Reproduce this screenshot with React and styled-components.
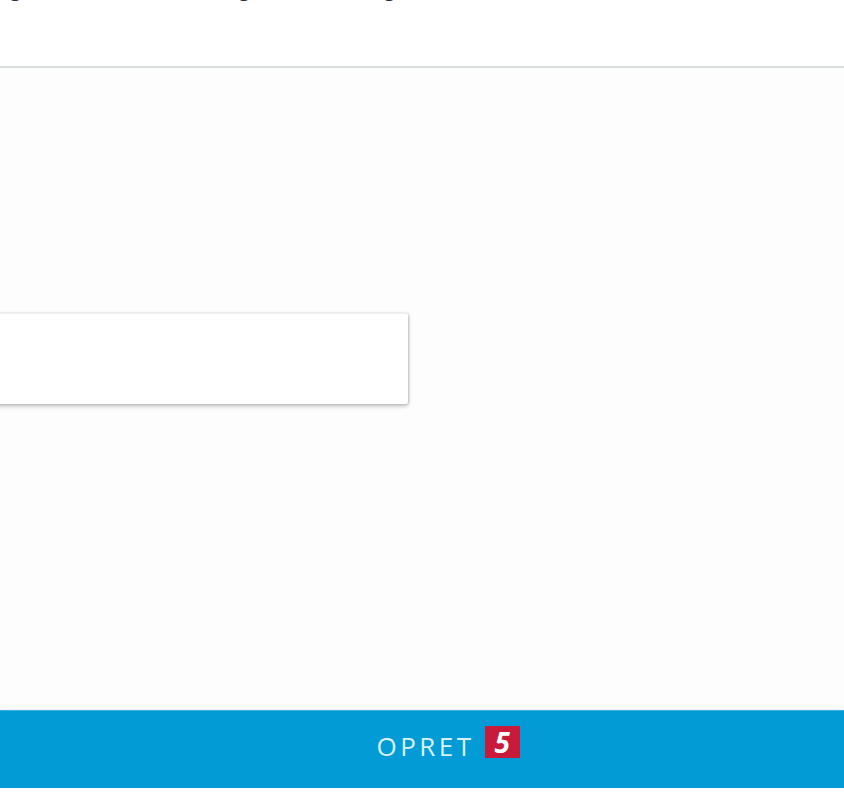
import styled, { createGlobalStyle } from 'styled-components';

const GlobalStyle = createGlobalStyle`
  html, body {
    margin: 0;
    padding: 0;
    background: #fefefe;
    font-family: 'Open Sans', 'Liberation Sans', sans-serif;
    overflow: hidden;
  }
`;

const App = () => {
  return (
    <>
      <GlobalStyle />
      <Page>
        <Header>
          <Intro>gentast den rette kode og skriv den ind igen.</Intro>
        </Header>
        <Body>
          <Field />
        </Body>
        <SubmitBar type="button">
          <span>OPRET</span>
          <Badge>5</Badge>
        </SubmitBar>
        <Footer />
      </Page>
    </>
  );
};

export default App;

const Page = styled.div`
  display: flex;
  flex-direction: column;
  width: 844px;
  height: 798px;
`;

const Header = styled.header`
  height: 66px;
  background: #ffffff;
  border-bottom: 2px solid #d9dddc;
  overflow: hidden;
`;

const Intro = styled.p`
  margin: -23px 0 0 10px;
  font-size: 20px;
  line-height: 24px;
  color: #2e2e2e;
  white-space: nowrap;
`;

const Body = styled.main`
  flex: 1;
  display: flex;
  flex-direction: column;
  align-items: flex-start;
  padding-top: 245px;
  background: #fdfdfd;
`;

const Field = styled.div`
  width: 420px;
  height: 90px;
  margin-left: -12px;
  background: #ffffff;
  border-top: 1px solid #f0f0f0;
  box-shadow: 0 2px 4px rgba(0, 0, 0, 0.28), 1px 0 2px rgba(0, 0, 0, 0.12);
  border-radius: 2px;
`;

const SubmitBar = styled.button`
  display: flex;
  align-items: center;
  justify-content: center;
  gap: 10px;
  height: 78px;
  width: 100%;
  border: 0;
  border-top: 1px solid #3aafdd;
  padding: 0 0 8px 52px;
  background: #039bd6;
  box-shadow: 0 2px 4px rgba(0, 0, 0, 0.35);
  color: #d8f2fb;
  font-family: 'Open Sans', 'Liberation Sans', sans-serif;
  font-size: 26px;
  letter-spacing: 3.5px;
  cursor: pointer;
`;

const Badge = styled.span`
  display: inline-flex;
  align-items: center;
  justify-content: center;
  width: 35px;
  height: 32px;
  margin-top: -8px;
  background: #c91a3a;
  color: #ffffff;
  font-size: 28px;
  font-weight: 700;
  font-style: italic;
  letter-spacing: 0;
`;

const Footer = styled.div`
  height: 10px;
  background: #ffffff;
`;
